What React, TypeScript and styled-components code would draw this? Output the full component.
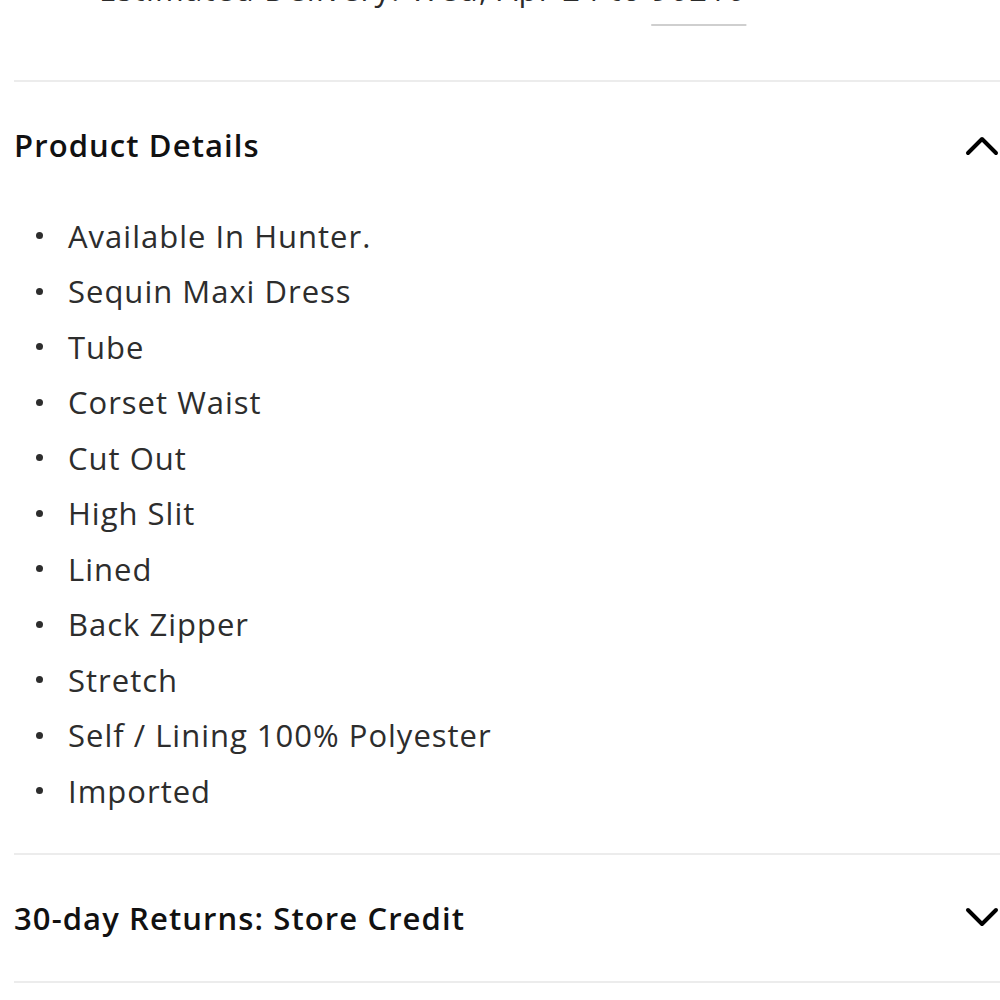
import * as React from 'react'
import styled, {createGlobalStyle} from 'styled-components'

const GlobalStyle = createGlobalStyle`
  html, body {
    margin: 0;
    padding: 0;
    background: #fff;
    overflow: hidden;
  }
  body {
    font-family: "Open Sans", "Noto Sans", sans-serif;
  }
`

const Page = styled.div`
  width: 986px;
  margin-left: 14px;
`

const DeliveryLine = styled.div`
  margin-top: -29px;
  padding-left: 85px;
  height: 109px;
  font-size: 31px;
  line-height: 36px;
  letter-spacing: 1.3px;
  color: #2b2b2b;
  white-space: nowrap;
`

const ZipLink = styled.span`
  text-decoration: underline;
  text-decoration-color: #cfcfcf;
  text-decoration-thickness: 2px;
  text-underline-offset: 23px;
`

const Divider = styled.div`
  height: 2px;
  background: #ececec;
`

const SectionHeader = styled.div`
  display: flex;
  align-items: center;
  justify-content: space-between;
  height: 126px;
`

const SectionTitle = styled.h2`
  margin: 0;
  font-size: 31px;
  font-weight: 600;
  letter-spacing: 1.1px;
  color: #111;
`

const Chevron = styled.svg`
  width: 34px;
  height: 22px;
  margin-right: 1px;
`

const List = styled.ul`
  list-style: none;
  margin: 0;
  padding: 0 0 34px 0;
`

const Item = styled.li`
  display: flex;
  align-items: center;
  gap: 25px;
  height: 55.5px;
  padding-left: 22px;
  font-size: 31px;
  letter-spacing: 1px;
  color: #2d2d2d;
`

const Dot = styled.span`
  width: 7px;
  height: 7px;
  border-radius: 50%;
  background: #2d2d2d;
  flex: none;
`

const ChevronIcon = ({up}: {up: boolean}) => (
  <Chevron viewBox="0 0 34 22">
    <path
      d={up ? 'M3 19 L17 5 L31 19' : 'M3 3 L17 17 L31 3'}
      fill="none"
      stroke="#000"
      strokeWidth="4"
      strokeLinecap="round"
      strokeLinejoin="round"
    />
  </Chevron>
)

const details = [
  'Available In Hunter.',
  'Sequin Maxi Dress',
  'Tube',
  'Corset Waist',
  'Cut Out',
  'High Slit',
  'Lined',
  'Back Zipper',
  'Stretch',
  'Self / Lining 100% Polyester',
  'Imported',
]

const App = () => {
  return (
    <Page>
      <GlobalStyle />
      <DeliveryLine>
        Estimated Delivery: Wed, Apr 24 to <ZipLink>90210</ZipLink>
      </DeliveryLine>
      <Divider />
      <SectionHeader>
        <SectionTitle>Product Details</SectionTitle>
        <ChevronIcon up />
      </SectionHeader>
      <List>
        {details.map((d) => (
          <Item key={d}>
            <Dot />
            {d}
          </Item>
        ))}
      </List>
      <Divider />
      <SectionHeader>
        <SectionTitle>30-day Returns: Store Credit</SectionTitle>
        <ChevronIcon up={false} />
      </SectionHeader>
      <Divider />
    </Page>
  )
}

export default App
